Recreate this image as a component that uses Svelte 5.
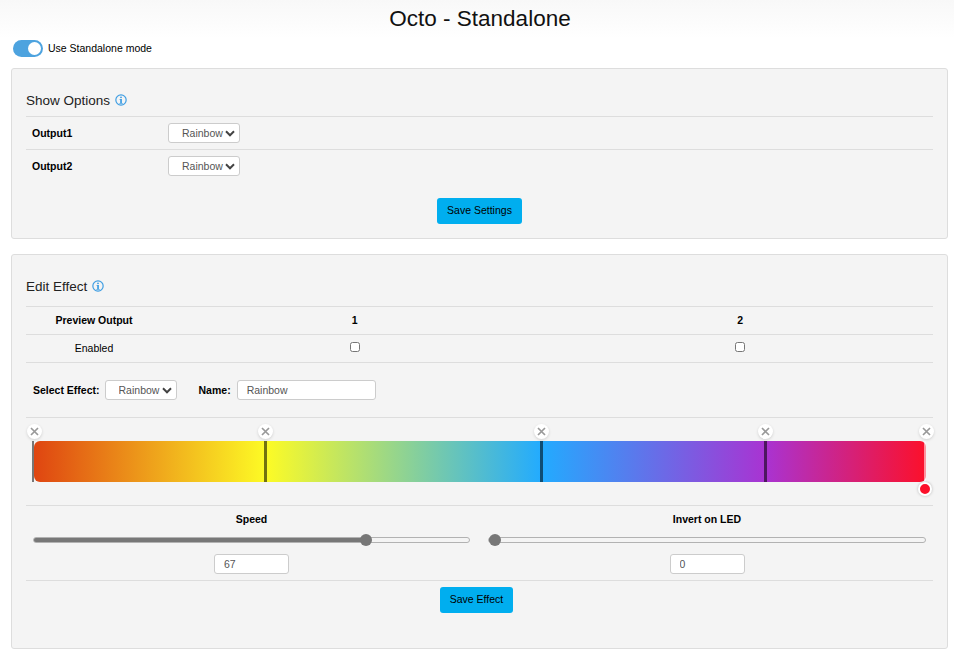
<script>
	let standalone = $state(true);
	let outputs = $state([
		{ name: 'Output1', effect: 'Rainbow' },
		{ name: 'Output2', effect: 'Rainbow' }
	]);
	let effect = $state('Rainbow');
	let effectName = $state('Rainbow');
	let speed = $state(67);
	let invert = $state(0);

	const SPEED_MAX = 87;
	const INVERT_MAX = 100;

	const stops = [
		{ pos: 0, color: '#df4511' },
		{ pos: 26, color: '#fdfb25' },
		{ pos: 56.9, color: '#22abff' },
		{ pos: 82, color: '#a933d2' },
		{ pos: 100, color: '#fc102a' }
	];
	let gradient = stops.map((s) => `${s.color} ${s.pos}%`).join(', ');

	// fill stops under the thumb centre (thumb is 12px wide)
	function fill(value, max) {
		let p = value / max;
		return `--fill: calc(${p * 100}% + ${6 - 12 * p}px)`;
	}
</script>

{#snippet info()}
	<svg class="info" viewBox="0 0 13 13" width="12" height="12" aria-hidden="true">
		<circle cx="6.5" cy="6.5" r="5.6" fill="none" stroke="#3f9ee3" stroke-width="1.3" />
		<circle cx="6.5" cy="3.6" r="1" fill="#3f9ee3" />
		<path d="M4.9 5.3h2.6v4.4h.9v.9H4.7v-.9h.9V6.2h-.7z" fill="#3f9ee3" />
	</svg>
{/snippet}

<div class="page">
	<header>
		<h1>Octo - Standalone</h1>
	</header>

	<label class="mode">
		<input type="checkbox" bind:checked={standalone} />
		<span class="toggle"></span>
		Use Standalone mode
	</label>

	<section class="card options">
		<h3>Show Options {@render info()}</h3>
		{#each outputs as output}
			<div class="output-row">
				<b>{output.name}</b>
				<select bind:value={output.effect}>
					<option>Rainbow</option>
					<option>Chase</option>
					<option>Solid</option>
				</select>
			</div>
		{/each}
		<div class="actions save-settings">
			<button type="button">Save Settings</button>
		</div>
	</section>

	<section class="card edit">
		<h3>Edit Effect {@render info()}</h3>
		<div class="preview-row head">
			<b>Preview Output</b>
			<b>1</b>
			<b>2</b>
		</div>
		<div class="preview-row">
			<span>Enabled</span>
			<input type="checkbox" />
			<input type="checkbox" />
		</div>
		<div class="effect-row">
			<b class="effect-label">Select Effect:</b>
			<select bind:value={effect}>
				<option>Rainbow</option>
				<option>Chase</option>
				<option>Solid</option>
			</select>
			<b class="name-label">Name:</b>
			<input type="text" class="name" bind:value={effectName} />
		</div>

		<div class="gradient-box">
			<div class="bar" style="background: linear-gradient(to right, {gradient})">
				{#each stops as stop, i}
					<span class="marker" class:first={i === 0} class:last={i === stops.length - 1} style="left: {stop.pos}%"></span>
					<button type="button" class="remove" style="left: {stop.pos}%" aria-label="Remove stop">
						<svg viewBox="0 0 9 9" width="9" height="9"><path d="M1 1l7 7M8 1L1 8" stroke="#999" stroke-width="1.7" fill="none" /></svg>
					</button>
				{/each}
				<span class="picker"></span>
			</div>
		</div>

		<div class="sliders">
			<div class="slider">
				<b>Speed</b>
				<input type="range" min="0" max={SPEED_MAX} bind:value={speed} style={fill(speed, SPEED_MAX)} />
				<input type="text" class="num" bind:value={speed} />
			</div>
			<div class="slider">
				<b>Invert on LED</b>
				<input type="range" min="0" max={INVERT_MAX} bind:value={invert} style={fill(invert, INVERT_MAX)} />
				<input type="text" class="num" bind:value={invert} />
			</div>
		</div>
		<div class="actions save-effect">
			<button type="button">Save Effect</button>
		</div>
	</section>
</div>

<style>
	:global(body) {
		background: #fff;
		font-family: 'Liberation Sans', Arial, sans-serif;
		font-size: 10.5px;
		color: #000;
		overflow: hidden;
	}

	.page {
		padding: 0 6px 0 11px;
	}

	header {
		margin: 0 -6px 0 -11px;
		height: 38px;
		background: linear-gradient(#f8f8f8, #fff);
		padding-left: 6px;
	}

	h1 {
		margin: 0;
		font-size: 22.5px;
		line-height: 38px;
		font-weight: 400;
		text-align: center;
		color: #111;
	}

	.mode {
		display: flex;
		align-items: center;
		gap: 5px;
		height: 17px;
		margin: 2px 0 11px 2px;
		line-height: 17px;
	}

	.mode input {
		display: none;
	}

	.toggle {
		position: relative;
		width: 30px;
		height: 17px;
		border-radius: 9px;
		background: #ccc;
	}

	.mode input:checked + .toggle {
		background: #4da3df;
	}

	.toggle::after {
		content: '';
		position: absolute;
		top: 3px;
		left: 3px;
		width: 11px;
		height: 11px;
		border-radius: 50%;
		background: #fff;
	}

	.mode input:checked + .toggle::after {
		left: 15px;
		top: 2px;
		width: 13px;
		height: 13px;
	}

	.card {
		background: #f4f4f4;
		border: 1px solid #ddd;
		border-radius: 3px;
		padding: 0 14px;
		box-sizing: border-box;
	}

	.options {
		height: 171px;
		margin-bottom: 15px;
	}

	.edit {
		height: 395px;
	}

	h3 {
		margin: 0;
		font-size: 13.5px;
		font-weight: 400;
		line-height: 18px;
		color: #222;
		display: flex;
		align-items: center;
		gap: 5px;
	}

	.options h3 {
		padding: 23px 0 6px;
	}

	.edit h3 {
		padding: 23px 0 10px;
	}

	.info {
		flex: none;
		margin-bottom: 2px;
	}

	.output-row {
		display: flex;
		align-items: center;
		height: 32px;
		border-top: 1px solid #ddd;
		padding-left: 6px;
	}

	.output-row b {
		width: 136px;
	}

	select {
		appearance: none;
		-webkit-appearance: none;
		height: 20px;
		width: 72px;
		padding: 0 0 0 13px;
		background: #fff url("data:image/svg+xml,%3Csvg xmlns='http://www.w3.org/2000/svg' viewBox='0 0 10 7'%3E%3Cpath d='M1 1.3l4 4 4-4' fill='none' stroke='%23444' stroke-width='2'/%3E%3C/svg%3E") no-repeat right 4px center / 10px 7px;
		border: 1px solid #ccc;
		border-radius: 3px;
		color: #555;
		font: 10.5px 'Liberation Sans', Arial, sans-serif;
		box-sizing: border-box;
	}

	.actions {
		display: flex;
		justify-content: center;
	}

	.save-settings {
		margin-top: 16px;
	}

	.save-effect {
		border-top: 1px solid #ddd;
		padding: 6px 6px 0 0;
	}

	.actions button {
		height: 26px;
		padding: 0 10px 2px;
		background: #00aeef;
		border: none;
		border-radius: 3px;
		color: #000;
		font: 10.5px 'Liberation Sans', Arial, sans-serif;
	}

	.preview-row {
		display: grid;
		grid-template-columns: 136px 1fr 1fr;
		align-items: center;
		justify-items: center;
		height: 25px;
		padding-bottom: 2px;
		border-top: 1px solid #ddd;
		text-align: center;
	}

	.preview-row input {
		margin: 0 0 1px;
		width: 10px;
		height: 10px;
	}

	.effect-row {
		display: flex;
		align-items: center;
		height: 54px;
		border-top: 1px solid #ddd;
		padding-left: 7px;
		gap: 6px;
	}

	.effect-label {
		margin-right: -1px;
	}

	.name-label {
		margin-left: 16px;
	}

	input[type='text'] {
		box-sizing: border-box;
		height: 20px;
		background: #fff;
		border: 1px solid #ccc;
		border-radius: 3px;
		color: #555;
		padding: 0 0 0 9px;
		font: 10.5px 'Liberation Sans', Arial, sans-serif;
		outline: none;
	}

	.name {
		width: 139px;
	}

	.gradient-box {
		border-top: 1px solid #ddd;
		padding: 23px 7px 23px 8px;
	}

	.bar {
		position: relative;
		height: 41px;
		border-radius: 6px;
	}

	.marker {
		position: absolute;
		top: 0;
		bottom: 0;
		width: 3px;
		margin-left: -1.5px;
		background: rgba(0, 0, 0, 0.55);
	}

	.marker.first {
		background: #777;
		margin-left: -2px;
		width: 2px;
	}

	.marker.last {
		background: rgba(255, 255, 255, 0.55);
		margin-left: -2px;
		width: 2px;
	}

	.remove {
		position: absolute;
		top: -17px;
		width: 15px;
		height: 15px;
		margin-left: -7.5px;
		padding: 0;
		border: none;
		border-radius: 50%;
		background: #fff;
		box-shadow: 0 1px 3px rgba(0, 0, 0, 0.15);
		display: flex;
		align-items: center;
		justify-content: center;
	}

	.picker {
		position: absolute;
		right: -6px;
		bottom: -14px;
		width: 10px;
		height: 10px;
		border: 2px solid #fff;
		border-radius: 50%;
		background: #fc102a;
		box-shadow: 0 0 3px rgba(0, 0, 0, 0.25);
	}

	.sliders {
		display: grid;
		grid-template-columns: 437px 1fr;
		gap: 18px;
		border-top: 1px solid #ddd;
		padding: 0 7px;
		height: 74px;
	}

	.slider {
		display: flex;
		flex-direction: column;
		align-items: center;
	}

	.slider b {
		line-height: 13px;
		margin-top: 7px;
	}

	.slider input[type='range'] {
		-webkit-appearance: none;
		appearance: none;
		width: 100%;
		height: 12px;
		margin: 8px 0;
		background: transparent;
	}

	.slider input[type='range']::-webkit-slider-runnable-track {
		height: 6px;
		box-sizing: border-box;
		border: 1px solid #b2b2b2;
		border-radius: 3px;
		background: linear-gradient(to right, #777 var(--fill), transparent var(--fill));
	}

	.slider input[type='range']::-webkit-slider-thumb {
		-webkit-appearance: none;
		width: 12px;
		height: 12px;
		margin-top: -4px;
		border-radius: 50%;
		background: #777;
	}

	.num {
		width: 75px;
	}
</style>
